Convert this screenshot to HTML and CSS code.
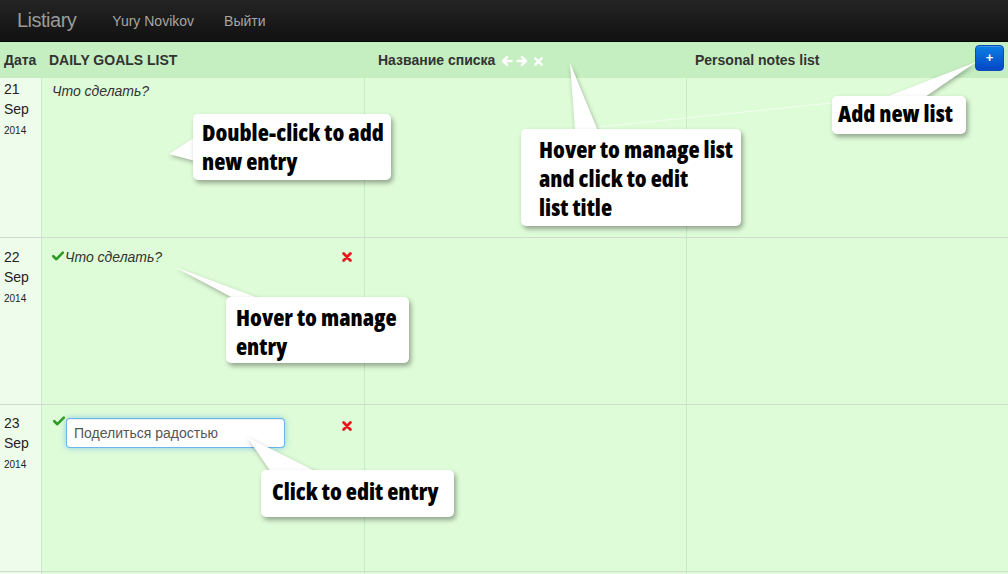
FILE: index.html
```html
<!DOCTYPE html>
<html lang="ru">
<head>
<meta charset="utf-8">
<title>Listiary</title>
<link rel="stylesheet" href="styles.css">
</head>
<body>
<header class="navbar">
  <a class="brand">Listiary</a>
  <nav class="nav">
    <a class="nav-link">Yury Novikov</a>
    <a class="nav-link">Выйти</a>
  </nav>
</header>

<main class="board">
  <div class="head">
    <div class="hcell hdate">Дата</div>
    <div class="hcell hc1">DAILY GOALS LIST</div>
    <div class="hcell hc2">Название списка
      <span class="hicons">
        <svg class="hicon" viewBox="0 0 12 12"><path d="M10.5 6H2.5M6 2.2L2.2 6 6 9.8" fill="none" stroke="#fff" stroke-width="2.6" stroke-linecap="round" stroke-linejoin="round"/></svg>
        <svg class="hicon" viewBox="0 0 12 12"><path d="M1.5 6H9.5M6 2.2L9.8 6 6 9.8" fill="none" stroke="#fff" stroke-width="2.6" stroke-linecap="round" stroke-linejoin="round"/></svg>
        <svg class="hicon hx" viewBox="0 0 12 12"><path d="M2.5 2.5L9.5 9.5M9.5 2.5L2.5 9.5" fill="none" stroke="#fff" stroke-width="2.6" stroke-linecap="round"/></svg>
      </span>
    </div>
    <div class="hcell hc3">Personal notes list <button class="add-btn">+</button></div>
  </div>

  <div class="row row-first">
    <div class="date">21<br>Sep<br><small>2014</small></div>
    <div class="cell"><div class="entry"><span class="placeholder">Что сделать?</span></div></div>
    <div class="cell"></div>
    <div class="cell"></div>
  </div>

  <div class="row">
    <div class="date">22<br>Sep<br><small>2014</small></div>
    <div class="cell">
      <div class="entry">
        <svg class="check" viewBox="0 0 12 10"><path d="M1.3 5.2L4.4 8.2 10.8 1.6" fill="none" stroke="#2f9a23" stroke-width="2.6" stroke-linecap="round" stroke-linejoin="round"/></svg>
        <span class="placeholder">Что сделать?</span>
        <svg class="remove" viewBox="0 0 10 10"><path d="M1.6 1.6L8.4 8.4M8.4 1.6L1.6 8.4" fill="none" stroke="#e8141c" stroke-width="2.8" stroke-linecap="round"/></svg>
      </div>
    </div>
    <div class="cell"></div>
    <div class="cell"></div>
  </div>

  <div class="row row-edit">
    <div class="date">23<br>Sep<br><small>2014</small></div>
    <div class="cell">
      <div class="entry">
        <svg class="check" viewBox="0 0 12 10"><path d="M1.3 5.2L4.4 8.2 10.8 1.6" fill="none" stroke="#2f9a23" stroke-width="2.6" stroke-linecap="round" stroke-linejoin="round"/></svg>
        <input class="entry-input" type="text" value="Поделиться радостью">
        <svg class="remove" viewBox="0 0 10 10"><path d="M1.6 1.6L8.4 8.4M8.4 1.6L1.6 8.4" fill="none" stroke="#e8141c" stroke-width="2.8" stroke-linecap="round"/></svg>
      </div>
    </div>
    <div class="cell"></div>
    <div class="cell"></div>
  </div>

  <div class="row row-rest">
    <div class="date"></div>
    <div class="cell"></div>
    <div class="cell"></div>
    <div class="cell"></div>
  </div>
</main>

<svg class="pointers" viewBox="0 0 1008 574" width="1008" height="574">
  <line x1="560" y1="131" x2="890" y2="97" stroke="rgba(255,255,255,0.55)" stroke-width="1"/>
  <g class="ptr">
    <polygon points="169,154 195,137 195,161"/>
    <polygon points="570,63 575,131 598,131"/>
    <polygon points="976,62 886,97 925,97"/>
    <polygon points="175,267 235,299 261,299"/>
    <polygon points="247,437 271,472 317,472"/>
  </g>
</svg>

<div class="callout co-1">Double-click to add<br>new entry</div>
<div class="callout co-2">Hover to manage list<br>and click to edit<br>list title</div>
<div class="callout co-3">Add new list</div>
<div class="callout co-4">Hover to manage<br>entry</div>
<div class="callout co-5">Click to edit entry</div>
</body>
</html>
```

FILE: styles.css
```css
* { box-sizing: border-box; }

html, body {
  margin: 0;
  padding: 0;
  width: 1008px;
  height: 574px;
  overflow: hidden;
  background: #dffcd8;
  font-family: "Liberation Sans", Arial, sans-serif;
  font-size: 14px;
  color: #333;
}

/* ---------- navbar ---------- */
.navbar {
  height: 42px;
  display: flex;
  align-items: center;
  background: linear-gradient(#242424, #111);
  border-bottom: 1px solid #050505;
}

.brand {
  padding-left: 17px;
  font-size: 20px;
  color: #9a9a9a;
  letter-spacing: -0.5px;
  margin-top: -1px;
}

.nav {
  display: flex;
  margin-left: 36px;
  gap: 30px;
}

.nav-link {
  color: #a6a6a6;
  font-size: 14px;
}

/* ---------- board ---------- */
.board {
  display: flex;
  flex-direction: column;
}

.head,
.row {
  display: grid;
  grid-template-columns: 42px 323px 322px 321px;
}

.head {
  height: 36px;
  background: #c5eec1;
  font-weight: bold;
  color: #333;
}

.hcell {
  display: flex;
  align-items: center;
  line-height: 20px;
}

.hdate { padding-left: 4px; }
.hc1 { padding-left: 7px; }
.hc2 { padding-left: 13px; }
.hc3 {
  padding-left: 8px;
  padding-right: 4px;
  justify-content: space-between;
}

.hicons {
  display: inline-flex;
  gap: 3px;
  margin-left: 6px;
  margin-top: 1px;
}

.hicon {
  width: 12px;
  height: 12px;
}

.hx { margin-left: 2px; width: 11px; height: 11px; margin-top: 1px; }

.add-btn {
  width: 29px;
  height: 26px;
  align-self: flex-start;
  margin-top: 3px;
  padding: 0;
  border: 1px solid #0a4bb8;
  border-radius: 4px;
  background: linear-gradient(#0b7fe4, #0447c4);
  color: #fff;
  font-family: "Liberation Sans", Arial, sans-serif;
  font-weight: bold;
  font-size: 13px;
  line-height: 22px;
  box-shadow: inset 0 1px 0 rgba(255,255,255,0.2);
}

.row {
  height: 167px;
  border-bottom: 1px solid #d2dbd0;
}

.row-first { height: 160px; }
.row-rest { height: 2px; border-bottom: 0; }

.date {
  background: #eefdeb;
  border-right: 1px solid #cde9c9;
  padding: 9px 0 0 4px;
  line-height: 20px;
  color: #222;
}

.row-first .date { padding-top: 1px; }
.row-edit .date { padding-top: 8px; }

.date small {
  font-size: 10px;
  line-height: 20px;
}

.cell {
  border-right: 1px solid #c6ecc1;
  padding: 9px 12px 0 10px;
}

.cell:last-child { border-right: 0; }

.row-first .cell { padding-top: 3px; }

.entry {
  display: flex;
  align-items: flex-start;
  line-height: 20px;
}

.placeholder {
  font-style: italic;
  color: #333;
}

.check {
  width: 12px;
  height: 10px;
  margin-top: 4px;
  margin-right: 1px;
  flex: none;
}

.remove {
  width: 10px;
  height: 10px;
  margin-left: auto;
  margin-top: 5px;
  flex: none;
}

.row-edit .check {
  margin-left: 1px;
  margin-top: 2px;
  margin-right: 1px;
}

.row-edit .remove { margin-top: 7px; }

.entry-input {
  width: 219px;
  height: 30px;
  margin-top: 4px;
  padding: 4px 7px;
  border: 1px solid rgba(82,168,236,0.85);
  border-radius: 4px;
  background: #fff;
  font-family: "Liberation Sans", Arial, sans-serif;
  font-size: 14px;
  color: #555;
  outline: none;
  box-shadow: inset 0 1px 1px rgba(0,0,0,0.075), 0 0 6px rgba(82,168,236,0.6);
}

/* ---------- annotations ---------- */
.pointers {
  position: absolute;
  top: 0;
  left: 0;
  pointer-events: none;
}

.ptr polygon {
  fill: #fff;
}

.ptr {
  filter: drop-shadow(1px 2px 2px rgba(0,0,0,0.3));
}

.callout {
  position: absolute;
  background: #fff;
  border-radius: 5px;
  box-shadow: 2px 3px 5px rgba(0,0,0,0.35);
  font-family: "Open Sans", "Liberation Sans Narrow", sans-serif;
  font-weight: 800;
  font-stretch: 77%;
  font-size: 23px;
  line-height: 29px;
  color: #000;
  white-space: nowrap;
}

.co-1 { left: 193px; top: 114px; width: 198px; height: 66px; padding: 4px 0 0 9px; }
.co-2 { left: 521px; top: 129px; width: 220px; height: 97px; padding: 6px 0 0 18px; }
.co-3 { left: 832px; top: 96px;  width: 134px; height: 38px; padding: 3px 0 0 6px; }
.co-4 { left: 226px; top: 297px; width: 183px; height: 66px; padding: 6px 0 0 10px; }
.co-5 { left: 261px; top: 470px; width: 193px; height: 47px; padding: 7px 0 0 11px; }
```
